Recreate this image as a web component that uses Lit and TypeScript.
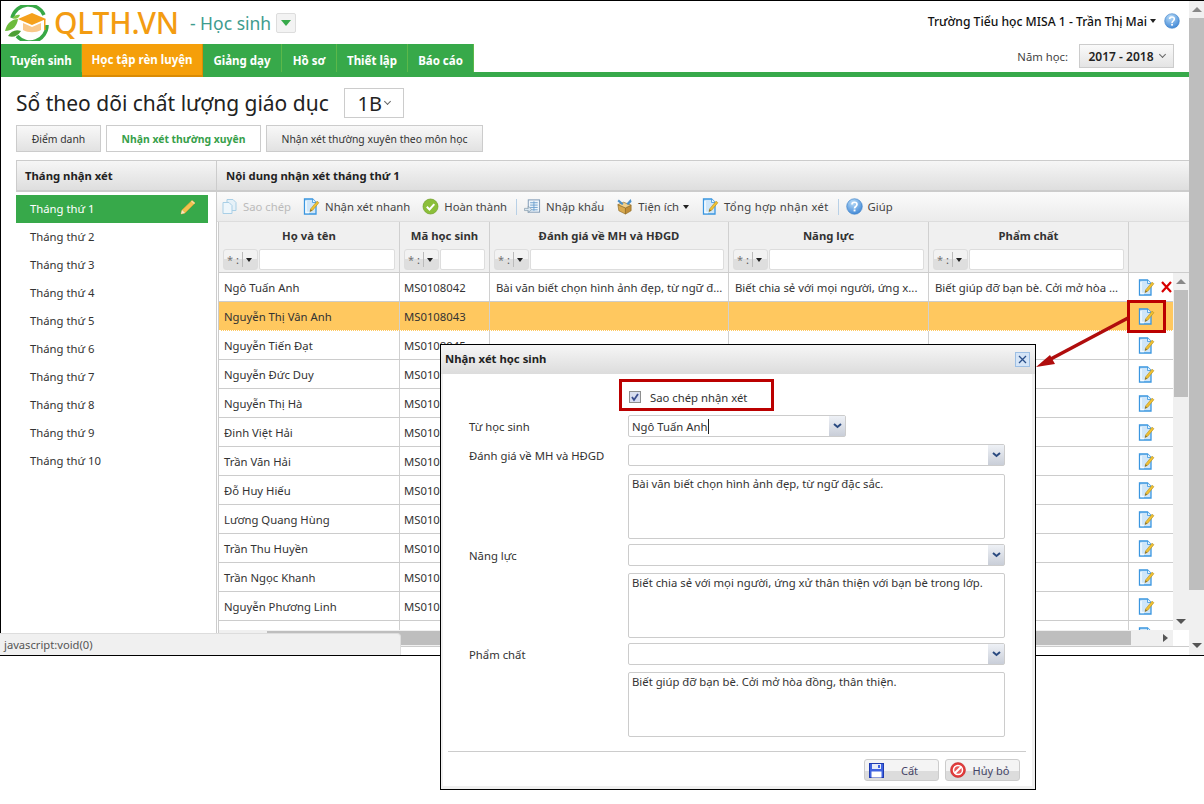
import { LitElement, html, css, svg } from "lit";
import { customElement } from "lit/decorators.js";

const noteIcon = (dim = false) => html`<svg class="ic ${dim ? "dim" : ""}" width="17" height="17" viewBox="0 0 17 17">
  <path d="M1.500 1h8l3.500 3.500V16H1.500z" fill="#cfe6f9" stroke="#3a96e0" stroke-width="1.300"/>
  <path d="M3 3v11.500h3" fill="none" stroke="#f4fbff" stroke-width="1.500"/>
  <path d="M9.500 1v3.500H13" fill="#eaf5fd" stroke="#3a96e0" stroke-width=".8"/>
  <path d="M7 13.500l.8-2.800L14 3.200l1.900 1.500-6.200 7.500z" fill="#f1c232" stroke="#b58b1a" stroke-width=".6"/>
  <path d="M7 13.500l.6-2.200 1.600 1.300z" fill="#7a6a3a"/>
</svg>`;

const copyIcon = html`<svg class="ic" width="17" height="17" viewBox="0 0 17 17">
  <path d="M6 1.500h6l3 3v8h-9z" fill="#e6f1f8" stroke="#a9cfe6"/>
  <path d="M2 4.500h6l3 3v8H2z" fill="#eef6fb" stroke="#a9cfe6"/>
</svg>`;

const checkIcon = html`<svg class="ic" width="17" height="17" viewBox="0 0 17 17">
  <circle cx="8.500" cy="8.500" r="7.500" fill="#8cbf3a" stroke="#6f9f26" stroke-width=".7"/>
  <path d="M4.800 8.800l2.700 2.700 4.800-5.300" fill="none" stroke="#fff" stroke-width="2"/>
</svg>`;

const importIcon = html`<svg class="ic" width="17" height="17" viewBox="0 0 18 17">
  <rect x="4.500" y="1.500" width="12" height="13" fill="#eef5fb" stroke="#7d97b3"/>
  <path d="M6.500 4.500h8M6.500 7h8M6.500 9.500h8M6.500 12h8M10.500 3v10" stroke="#6d9fce" stroke-width="1"/>
  <path d="M.5 10.500h4V8l3.500 3.500L4.500 15v-2.200h-4z" fill="#d9e6f0" stroke="#7f96a8" stroke-width=".7"/>
</svg>`;

const toolsIcon = html`<svg class="ic" width="17" height="17" viewBox="0 0 18 18">
  <path d="M2 7l8 3.500v6.500l-7-3.500z" fill="#d9a94e" stroke="#8f6a23" stroke-width=".7"/>
  <path d="M10 10.500l6-3v6l-6 3.500z" fill="#c08d37" stroke="#8f6a23" stroke-width=".7"/>
  <path d="M2 7l6-2.500 8 3-6 3z" fill="#efd08e" stroke="#8f6a23" stroke-width=".7"/>
  <path d="M3 1.500l5 4.500-1.500 1.500-5-4z" fill="#4a8fc9"/>
  <path d="M15.500 1l1 3-3.500 3.500-2-1.500z" fill="#4a8fc9"/>
</svg>`;

const helpIcon = (s = 17) => html`<svg class="ic" width="${s}" height="${s}" viewBox="0 0 17 17">
  <defs><radialGradient id="hg" cx=".4" cy=".25" r=".9"><stop offset="0" stop-color="#b9dcf8"/><stop offset="1" stop-color="#2c79d0"/></radialGradient></defs>
  <circle cx="8.500" cy="8.500" r="7.800" fill="url(#hg)" stroke="#3a7fc6" stroke-width=".6"/>
  <path d="M6 6.500c0-3 5-3 5 0 0 2-2.500 2-2.500 4" fill="none" stroke="#fff" stroke-width="1.700"/>
  <rect x="7.600" y="11.500" width="1.900" height="1.900" fill="#fff"/>
</svg>`;

const pencilIcon = html`<svg class="pencil" width="16" height="16" viewBox="0 0 16 16">
  <path d="M1 15l1-4L12 1.500l3 2.500L5 14z" fill="#f2c14e" stroke="#e0a52e" stroke-width=".6"/>
  <path d="M11 2.500l3 2.500 1-1-3-2.500z" fill="#f6d9a0"/>
  <path d="M1 15l1-4 3 3z" fill="#f7e6c4"/>
</svg>`;

const delIcon = html`<svg class="ic" width="11" height="12" viewBox="0 0 11 12"><path d="M1 1l9 10M10 1L1 11" stroke="#d80000" stroke-width="2.200"/></svg>`;

const logo = html`<svg class="logo" width="46" height="36" viewBox="0 0 46 36">
  <path d="M9 13A17 17 0 0 1 41 10" fill="none" stroke="#38a846" stroke-width="3.500"/>
  <path d="M44 20A17 17 0 0 1 14 31" fill="none" stroke="#38a846" stroke-width="3.500"/>
  <path d="M2 26c2-9 8-12 13-12-1 7-5 12-13 12z" fill="#6dbb3d"/>
  <path d="M5 31c3-5 8-7 13-5-3 5-8 7-13 5z" fill="#4d9f35"/>
  <path d="M9 13c3-3 6-4 8-3-1 3-4 5-8 3z" fill="#7fc545"/>
  <path d="M15 14l14-6 14 6-14 6z" fill="#f5a11c"/>
  <path d="M20 18v7c5 3 13 3 18 0v-7l-9 4z" fill="#f9c88a"/>
  <rect x="41" y="14" width="1.500" height="11" fill="#f5a11c"/>
</svg>`;

const save = html`<svg class="ic" width="15" height="15" viewBox="0 0 15 15">
  <rect x=".5" y=".5" width="14" height="14" fill="#3f63e0" stroke="#1f3bb0"/>
  <rect x="3" y="1" width="9" height="5" fill="#e7ecf7"/><rect x="9" y="2" width="2" height="3" fill="#3f63e0"/>
  <rect x="2.500" y="8.500" width="10" height="6" fill="#fff"/>
</svg>`;

const cancel = html`<svg class="ic" width="16" height="16" viewBox="0 0 16 16">
  <circle cx="8" cy="8" r="7.500" fill="#e23b3b" stroke="#b92222" stroke-width=".5"/>
  <circle cx="8" cy="8" r="4.500" fill="#e85a5a" stroke="#fff" stroke-width="1.500"/>
  <path d="M4.700 11.300l6.600-6.600" stroke="#fff" stroke-width="2"/>
</svg>`;

const arrow = svg`<path d="M1128 318L1047 361" stroke="#b00d0d" stroke-width="3.500" fill="none"/><path d="M1036 367L1050 355l5 9z" fill="#b00d0d"/>`;

const rows: [string, string, string?, string?, string?][] = [
  ["Ngô Tuấn Anh", "MS0108042", "Bài văn biết chọn hình ảnh đẹp, từ ngữ đ...", "Biết chia sẻ với mọi người, ứng x...", "Biết giúp đỡ bạn bè. Cởi mở hòa ..."],
  ["Nguyễn Thị Vân Anh", "MS0108043"],
  ["Nguyễn Tiến Đạt", "MS0108045"],
  ["Nguyễn Đức Duy", "MS0108046"],
  ["Nguyễn Thị Hà", "MS0108047"],
  ["Đinh Việt Hải", "MS0108048"],
  ["Trần Văn Hải", "MS0108049"],
  ["Đỗ Huy Hiếu", "MS0108050"],
  ["Lương Quang Hùng", "MS0108051"],
  ["Trần Thu Huyền", "MS0108052"],
  ["Trần Ngọc Khanh", "MS0108053"],
  ["Nguyễn Phương Linh", "MS0108054"],
  ["", ""],
];

const months = [1, 2, 3, 4, 5, 6, 7, 8, 9, 10];
const tabs = ["Tuyển sinh", "Học tập rèn luyện", "Giảng dạy", "Hồ sơ", "Thiết lập", "Báo cáo"];
const cols = ["Họ và tên", "Mã học sinh", "Đánh giá về MH và HĐGD", "Năng lực", "Phẩm chất"];

@customElement("app-root")
export class AppRoot extends LitElement {
  static styles = css`
    :host { display: block; position: relative; width: 1204px; height: 804px; overflow: hidden; background: #fff;
      font-family: "Noto Sans", sans-serif; font-size: 11.300px; color: #222; }
    * { box-sizing: border-box; }
    .win { display: flex; height: 656px; border-top: 1px solid #000; border-left: 1px solid #000; border-bottom: 1px solid #000; }
    .page { width: 1188px; display: flex; flex-direction: column; }
    .pscroll { width: 15px; background: #f0f0f0; display: flex; flex-direction: column; align-items: center; }
    .pscroll .up { height: 17px; display: flex; align-items: center; }
    .pscroll .thumb { width: 15px; height: 572px; background: #bebebe; }
    .pscroll .sp { flex: 1; }
    .pscroll .dn { height: 20px; display: flex; align-items: center; }
    .tri-u { width: 0; height: 0; border: 5px solid transparent; border-top: 0; border-bottom: 5px solid #888; }
    .tri-d { width: 0; height: 0; border: 5px solid transparent; border-bottom: 0; border-top: 5px solid #555; }

    .top { height: 43px; display: flex; align-items: center; padding: 0 9px 0 2px; }
    .brand { color: #f39c12; font-size: 30px; font-weight: 500; margin-left: 5px; line-height: 36px; letter-spacing: -.2px; }
    .role { color: #3e9c8e; font-size: 17.500px; margin-left: 11px; }
    .rolebtn { width: 20px; height: 20px; margin-left: 5px; border: 1px solid #ddd; border-radius: 2px; background: #f3f3f3; display: flex; align-items: center; justify-content: center; }
    .rolebtn i { width: 0; height: 0; border: 5px solid transparent; border-bottom: 0; border-top: 6px solid #37a94a; }
    .user { margin-left: auto; margin-top: -3px; display: flex; align-items: center; gap: 3px; font-weight: 500; font-size: 12.150px; color: #111; }
    .car { width: 0; height: 0; border: 3.500px solid transparent; border-bottom: 0; border-top: 4px solid #222; display: inline-block; }
    .user .ic { margin-left: 5px; }

    .navwrap { height: 33px; border-bottom: 5px solid #37a94a; display: flex; align-items: flex-start; position: relative; }
    .tab { height: 28px; padding-top: 4px; background: #37a94a; color: #fff; font-weight: 700; display: flex; align-items: center; justify-content: center; border-right: 1px solid #5cb84a; font-size: 11.500px; }
    .tab.on { background: #f59f0a; height: 33px; border-bottom: 2px solid #d98b05; padding-top: 0; padding-bottom: 1px; border-right-color: #d98b05; }
    .year { margin-left: auto; margin-right: 15px; display: flex; align-items: center; gap: 11px; color: #444; height: 24px; }
    .yearbtn { width: 95px; height: 24px; border: 1px solid #ccc; background: linear-gradient(#fafafa, #e4e4e4); display: flex; align-items: center; justify-content: center; gap: 3px; font-weight: 600; font-size: 12px; color: #222; }
    .chev { width: 5px; height: 5px; border-right: 1px solid #666; border-bottom: 1px solid #666; transform: rotate(45deg); margin-top: -3px; margin-left: 3px; }

    .titlebar { display: flex; align-items: center; height: 30px; margin: 11px 0 7px 15px; }
    h1 { margin: 0; font-size: 21px; font-weight: 400; color: #222; }
    .cls { margin-left: 15px; width: 60px; height: 30px; border: 1px solid #ccc; display: flex; align-items: center; justify-content: center; font-size: 20px; color: #222; }
    .btns { display: flex; gap: 5px; margin-left: 15px; height: 27px; }
    .btn { border: 1px solid #ccc; background: linear-gradient(#f8f8f8, #e2e2e2); display: flex; align-items: center; justify-content: center; font-size: 10.400px; color: #333; }
    .btn.on { background: #fff; color: #37a04a; font-weight: 700; }

    .split { flex: 1; min-height: 0; display: flex; margin: 8px 0 0 15px; border-top: 1px solid #ccc; }
    .side { width: 200px; display: flex; flex-direction: column; }
    .hd { height: 31px; flex: none; background: linear-gradient(#f6f6f6, #dedede); border-bottom: 2px solid #ccc; font-weight: 700; display: flex; align-items: center; padding-left: 9px; color: #222; }
    .side .hd { border-left: 1px solid #ccc; padding-left: 8px; }
    .side ul { list-style: none; margin: 3px 0 0; padding: 0; width: 192px; }
    .side li { height: 28px; display: flex; align-items: center; padding: 0 0 2px 14px; color: #333; position: relative; }
    .side li.on { background: #37a94a; color: #fff; }
    .pencil { position: absolute; right: 12px; top: 4px; }
    .main { flex: 1; min-width: 0; border-left: 1px solid #ccc; display: flex; flex-direction: column; position: relative; }
    .tool { height: 30px; flex: none; background: linear-gradient(#fbfbfb, #ebebeb); border-bottom: 1px solid #ddd; display: flex; align-items: center; padding-left: 4px; color: #444; }
    .t { display: flex; align-items: center; gap: 5px; margin-right: 12px; }
    .t.off { color: #bbb; }
    .t.wide { letter-spacing: .3px; }
    .sep { width: 1px; height: 16px; background: #b8d0e6; margin: 0 7px 0 -3px; }
    .ic { flex: none; display: block; }
    .t .car { margin: 0 1px 0 -1px; }

    .grid { flex: 1; min-height: 0; margin-left: 1px; display: flex; flex-direction: column; overflow: hidden; border-left: 1px solid #ccc; }
    .ghead { display: grid; grid-template-columns: 181px 90px 239px 200px 200px 60px; height: 51px; background: #f0f0f0; border-bottom: 1px solid #ccc; flex: none; }
    .gh { border-right: 1px solid #d0d0d0; display: flex; flex-direction: column; align-items: center; padding-top: 6px; font-weight: 700; color: #333; }
    .gh:last-child { border-right: 0; }
    .filter { display: flex; width: 100%; gap: 1px; height: 22px; padding: 0 4px; margin-top: 6px; }
    .fbtn { width: 35px; flex: none; height: 21px; border: 1px solid #ddd; border-radius: 3px; background: linear-gradient(#f2f2f2 45%, #dedede 45%); display: flex; align-items: center; font-weight: 400; font-size: 11px; color: #777; padding-left: 3px; gap: 3px; }
    .fbtn b { font-weight: 400; color: #555; }
    .fbtn s { width: 1px; height: 15px; background: #bbb; }
    .finput { flex: 1; min-width: 0; height: 21px; background: #fff; border: 1px solid #ddd; border-radius: 2px; }
    .gbody { flex: 1; min-height: 0; display: flex; position: relative; }
    .grows { width: 954px; overflow: hidden; }
    .row { display: grid; grid-template-columns: 181px 90px 239px 200px 200px 44px; height: 29px; border-bottom: 1px solid #ccc; }
    .row.sel { background: #ffc85f; border-bottom: 1px dotted #fff; }
    .c { border-right: 1px solid #d0d0d0; display: flex; align-items: center; padding-left: 5px; white-space: nowrap; overflow: hidden; color: #333; }
    .c.code { padding-left: 4px; }
    .c.small { font-size: 11.350px; padding-left: 6px; }
    .c:last-child { border-right: 0; padding-left: 9px; gap: 6px; }
    .vs { width: 16px; background: #f0f0f0; display: flex; flex-direction: column; align-items: center; }
    .vs .a { height: 17px; display: flex; align-items: center; }
    .vs .th { width: 14px; height: 107px; background: #bebebe; }
    .vs .gap { flex: 1; }
    .hs { height: 16px; background: #f0f0f0; flex: none; display: flex; align-items: center; width: 954px; }
    .hs .th { margin-left: 48px; width: 864px; height: 14px; background: #bebebe; }
    .hs .tr { width: 0; height: 0; border: 4px solid transparent; border-right: 0; border-left: 5px solid #555; margin-left: 32px; }
    .foot { height: 9px; flex: none; border-top: 1px solid #ccc; }

    .status { position: absolute; left: 0; top: 633px; width: 401px; height: 22px; background: #f0f0f0; border: 1px solid #ddd; border-left: 0; border-bottom: 0; border-top-right-radius: 4px; display: flex; align-items: center; padding-left: 4px; color: #555; font-size: 11.200px; }

    .dlg { position: absolute; left: 440px; top: 344px; width: 596px; height: 446px; border: 1px solid #000; background: #f0f0f0; padding: 0 3px 3px 2px; display: flex; flex-direction: column; }
    .dt { height: 29px; margin: 0 -3px 0 -2px; background: linear-gradient(#f6f6f6, #dcdcdc); display: flex; align-items: center; justify-content: space-between; padding: 0 5px 2px 4px; font-weight: 700; color: #222; font-size: 11.300px; flex: none; }
    .close { width: 15px; height: 15px; margin-top: 2px; background: #d5e5f7; border: 1px solid #9dbfe4; color: #2a4f8a; display: flex; align-items: center; justify-content: center; }
    .db { flex: 1; background: #fff; padding: 13px 6px 0 5px; display: flex; flex-direction: column; }
    .chk { margin-left: 181px; height: 20px; display: flex; align-items: center; gap: 9px; color: #333; }
    .box { width: 12px; height: 12px; border: 1px solid #8e8f8f; background: #d9def0; display: flex; align-items: center; justify-content: center; }
    .form { display: grid; grid-template-columns: 159px 377px; margin-top: 8px; padding-left: 21px; }
    .lbl { height: 22px; display: flex; align-items: center; color: #333; }
    .combo { height: 22px; border: 1px solid #ccc; border-radius: 2px; display: flex; justify-content: space-between; align-items: center; color: #333; padding-left: 3px; }
    .combo.short { width: 218px; }
    .combo u { text-decoration: none; border-left: 1px solid #fff; background: linear-gradient(#eef1f6, #c9ced8); width: 17px; height: 20px; display: flex; align-items: center; justify-content: center; flex: none; }
    .combo u svg { display: block; }
    .combo .caret { border-right: 1px solid #222; padding-right: 1px; }
    .ta { grid-column: 2; height: 65px; border: 1px solid #ccc; border-radius: 2px; padding: 0 3px; margin: 8px 0 5px; color: #333; line-height: 17px; }
    .ta.n { margin-top: 7px; }
    .ta.last { margin: 7px 0 0; }
    .r2 { margin-top: 7px; }
    .dsep { border-top: 1px solid #ccc; margin: 14px 0 7px; }
    .acts { display: flex; justify-content: flex-end; gap: 6px; padding-right: 6px; }
    .act { width: 75px; height: 22px; border: 1px solid #ccc; border-radius: 3px; background: linear-gradient(#f4f4f4 55%, #dcdcdc 55%); display: flex; align-items: center; padding-left: 4px; color: #446; font-size: 11px; }
    .act span { flex: 1; text-align: center; padding-right: 3px; }

    .red { position: absolute; border: 3px solid #bb0000; pointer-events: none; }
    .r-a { left: 1127px; top: 300px; width: 39px; height: 33px; border-width: 3.500px; }
    .r-b { left: 619px; top: 379px; width: 155px; height: 32px; }
    .ov { position: absolute; left: 0; top: 0; pointer-events: none; }
  `;

  render() {
    const caret = html`<svg width="9" height="6" viewBox="0 0 9 6"><path d="M1 1l3.500 3L8 1" fill="none" stroke="#2a4a80" stroke-width="2"/></svg>`;
    const widths = [81, 121, 79, 55, 71, 66];
    return html`
      <div class="win">
        <div class="page">
          <div class="top">
            ${logo}
            <span class="brand">QLTH.VN</span>
            <span class="role">- Học sinh</span>
            <span class="rolebtn"><i></i></span>
            <span class="user">Trường Tiểu học MISA 1 - Trần Thị Mai <i class="car"></i>${helpIcon(16)}</span>
          </div>
          <div class="navwrap">
            ${tabs.map((t, i) => html`<div class="tab ${i === 1 ? "on" : ""}" style="width:${widths[i]}px">${t}</div>`)}
            <div class="year">Năm học: <div class="yearbtn">2017 - 2018<i class="chev"></i></div></div>
          </div>
          <div class="titlebar"><h1>Sổ theo dõi chất lượng giáo dục</h1><div class="cls">1B<i class="chev"></i></div></div>
          <div class="btns">
            <div class="btn" style="width:85px">Điểm danh</div>
            <div class="btn on" style="width:155px">Nhận xét thường xuyên</div>
            <div class="btn" style="width:217px">Nhận xét thường xuyên theo môn học</div>
          </div>
          <div class="split">
            <div class="side">
              <div class="hd">Tháng nhận xét</div>
              <ul>${months.map((m) => html`<li class="${m === 1 ? "on" : ""}">Tháng thứ ${m}${m === 1 ? pencilIcon : ""}</li>`)}</ul>
            </div>
            <div class="main">
              <div class="hd">Nội dung nhận xét tháng thứ 1</div>
              <div class="tool">
                <span class="t off">${copyIcon}Sao chép</span>
                <span class="t">${noteIcon()}Nhận xét nhanh</span>
                <span class="t">${checkIcon}Hoàn thành</span>
                <span class="sep"></span>
                <span class="t">${importIcon}Nhập khẩu</span>
                <span class="t">${toolsIcon}Tiện ích<i class="car"></i></span>
                <span class="t wide">${noteIcon()}Tổng hợp nhận xét</span>
                <span class="sep"></span>
                <span class="t">${helpIcon()}Giúp</span>
              </div>
              <div class="grid">
                <div class="ghead">
                  ${cols.map((c) => html`<div class="gh">${c}<div class="filter"><div class="fbtn">* <b>:</b><s></s><i class="car"></i></div><div class="finput"></div></div></div>`)}
                  <div class="gh"></div>
                </div>
                <div class="gbody">
                  <div class="grows">
                    ${rows.map((r, i) => html`<div class="row ${i === 1 ? "sel" : ""}">
                      <div class="c">${r[0]}</div><div class="c code">${r[1]}</div>
                      <div class="c small">${r[2] ?? ""}</div><div class="c small">${r[3] ?? ""}</div><div class="c small">${r[4] ?? ""}</div>
                      <div class="c">${noteIcon()}${i === 0 ? delIcon : ""}</div>
                    </div>`)}
                  </div>
                  <div class="vs"><div class="a"><i class="tri-u"></i></div><div class="th"></div><div class="gap"></div><div class="a"><i class="tri-d"></i></div></div>
                </div>
                <div class="hs"><div class="th"></div><i class="tr"></i></div>
                <div class="foot"></div>
              </div>
            </div>
          </div>
        </div>
        <div class="pscroll">
          <div class="up"><i class="tri-u"></i></div><div class="thumb"></div><div class="sp"></div><div class="dn"><i class="tri-d"></i></div>
        </div>
      </div>
      <div class="status">javascript:void(0)</div>

      <div class="dlg">
        <div class="dt">Nhận xét học sinh
          <div class="close"><svg width="9" height="9" viewBox="0 0 9 9"><path d="M1 1l7 7M8 1L1 8" stroke="#2a4f8a" stroke-width="1.300"/></svg></div>
        </div>
        <div class="db">
          <div class="chk"><span class="box"><svg width="10" height="10" viewBox="0 0 10 10"><path d="M2 5l2 3 4-6" fill="none" stroke="#3a4d8f" stroke-width="1.800"/></svg></span>Sao chép nhận xét</div>
          <div class="form">
            <div class="lbl">Từ học sinh</div>
            <div class="combo short"><span class="caret">Ngô Tuấn Anh</span><u>${caret}</u></div>
            <div class="lbl r2">Đánh giá về MH và HĐGD</div>
            <div class="combo r2"><span></span><u>${caret}</u></div>
            <div class="ta">Bài văn biết chọn hình ảnh đẹp, từ ngữ đặc sắc.</div>
            <div class="lbl">Năng lực</div>
            <div class="combo"><span></span><u>${caret}</u></div>
            <div class="ta n">Biết chia sẻ với mọi người, ứng xử thân thiện với bạn bè trong lớp.</div>
            <div class="lbl">Phẩm chất</div>
            <div class="combo"><span></span><u>${caret}</u></div>
            <div class="ta last">Biết giúp đỡ bạn bè. Cởi mở hòa đồng, thân thiện.</div>
          </div>
          <div class="dsep"></div>
          <div class="acts">
            <div class="act">${save}<span>Cất</span></div>
            <div class="act">${cancel}<span>Hủy bỏ</span></div>
          </div>
        </div>
      </div>
      <div class="red r-a"></div>
      <div class="red r-b"></div>
      <svg class="ov" width="1204" height="804">${arrow}</svg>
    `;
  }
}
